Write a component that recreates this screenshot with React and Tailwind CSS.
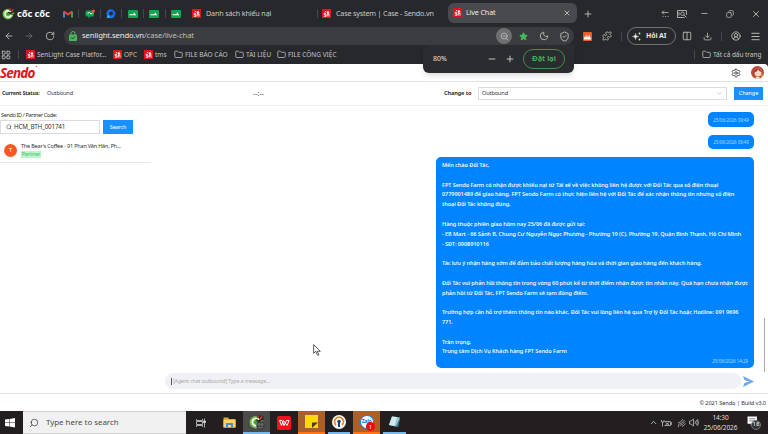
import React from 'react';
import {
  ArrowLeft, ArrowRight, RotateCw, X, Plus, Minus, Copy, Folder, LayoutGrid, Search, ZoomOut, Star, Moon,
  ShieldCheck, Puzzle, Columns2, Download, CircleUserRound, Menu, ChevronDown, ChevronUp, Settings,
} from 'lucide-react';

const message = [
  'Mến chào Đối Tác,',
  '',
  'FPT Sendo Farm có nhận được khiếu nại từ Tài xế về việc không liên hệ được với Đối Tác qua số điện thoại',
  '0779901489 để giao hàng. FPT Sendo Farm có thực hiện liên hệ với Đối Tác để xác nhận thông tin nhưng số điện',
  'thoại Đối Tác không đúng.',
  '',
  'Hàng thuộc phiên giao hôm nay 25/06 đã được gửi tại:',
  '- EB Mart - 66 Sảnh B, Chung Cư Nguyễn Ngọc Phương - Phường 19 (C), Phường 19, Quận Bình Thạnh, Hồ Chí Minh',
  '- SĐT: 0908910116',
  '',
  'Tác lưu ý nhận hàng sớm để đảm bảo chất lượng hàng hóa và thời gian giao hàng đến khách hàng.',
  '',
  'Đối Tác vui phản hồi thông tin trong vòng 60 phút kể từ thời điểm nhận được tin nhắn này. Quá hạn chưa nhận được',
  'phản hồi từ Đối Tác, FPT Sendo Farm sẽ tạm đóng điểm.',
  '',
  'Trường hợp cần hỗ trợ thêm thông tin nào khác, Đối Tác vui lòng liên hệ qua Trợ lý Đối Tác hoặc Hotline: 091 9696',
  '771.',
  '',
  'Trân trọng,',
  'Trung tâm Dịch Vụ Khách hàng FPT Sendo Farm',
];

const SendoIcon = () => (
  <svg viewBox="0 0 18 18" className="h-[9px] w-[9px] shrink-0">
    <rect width="18" height="18" fill="#e5101d" />
    <path d="M8 8.500H4.500v3H8v3H3.500M10.500 15v-4.500H14V15" fill="none" stroke="#fff" strokeWidth="1.800" />
    <path d="M9 7.500 10 4l2 1.500L13.500 3v4L16 8l-5 2z" fill="#fff" />
    <circle cx="7" cy="5" r="1.200" fill="#fff" />
  </svg>
);

const CocCocIcon = ({ className }) => (
  <svg viewBox="0 0 24 24" className={className}>
    <circle cx="11" cy="13" r="10" fill="#72bf44" />
    <path d="M11 13 13 1l10 2v11z" fill="#27282b" />
    <path d="M16 9a6 6 0 1 0 1 6" fill="none" stroke="#fff" strokeWidth="2.6" />
    <circle cx="11" cy="13" r="2.6" fill="#3a9b35" />
    <path d="m14 7 1-5M17 9l4-5" stroke="#e8452c" strokeWidth="2" />
    <path d="m18 12 5-1" stroke="#72bf44" strokeWidth="2" />
  </svg>
);

const GreenArrow = () => (
  <svg viewBox="0 0 20 16" className="h-[8px] w-[10px]">
    <rect width="20" height="16" rx="2" fill="#0ca750" />
    <path d="M3 9.500h13M12.500 5.500v4" stroke="#fff" strokeWidth="2.400" />
  </svg>
);

const Gmail = () => (
  <svg viewBox="0 0 20 16" className="h-[8px] w-[10px]">
    <path d="M2 15V3" stroke="#4285f4" strokeWidth="4" />
    <path d="M18 15V3" stroke="#34a853" strokeWidth="4" />
    <path d="m2 3 8 6 8-6" fill="none" stroke="#ea4335" strokeWidth="4" />
  </svg>
);

const ChatLogo = () => (
  <svg viewBox="0 0 20 20" className="h-[10px] w-[10px]">
    <path d="M4 3h11q3 0 3 3v6q0 3-3 3h-4l-4 4v-4H4q-3 0-3-3V6q0-3 3-3z" fill="#0ca750" />
    <path d="m5 9 4-2 3 3 3-2" fill="none" stroke="#fff" strokeWidth="2" />
    <circle cx="17" cy="4" r="3" fill="#f0562f" />
  </svg>
);

const BlueLogo = () => (
  <svg viewBox="0 0 20 20" className="h-[10px] w-[10px]">
    <circle cx="10" cy="9.500" r="9" fill="#1672ed" />
    <path d="M10 1a9 9 0 0 1 6 15" fill="none" stroke="#0b47b5" strokeWidth="2" />
    <circle cx="10" cy="9" r="4" fill="#27282b" />
    <path d="m1 18 3-6 5 5z" fill="#35c0f2" />
  </svg>
);

const Divider = () => <div className="h-[9px] w-px shrink-0 bg-[#47484b]" />;

const Header = () => (
  <div className="flex h-[27px] items-center text-[#c8c9ca]">
    <CocCocIcon className="ml-[2px] h-[13px] w-[13px] shrink-0" />
    <div className="ml-[2px] w-[36px] shrink-0 whitespace-nowrap text-[9.400px] font-bold leading-3 tracking-[-0.1px] text-white">cốc cốc</div>
    <div className="ml-[10px] flex w-[118px] shrink-0 items-center justify-between">
      <Gmail /><Divider /><ChatLogo /><Divider /><BlueLogo /><Divider />
      <GreenArrow /><Divider /><GreenArrow /><Divider /><GreenArrow />
    </div>
    <div className="flex w-[137px] shrink-0 items-center pl-[11px]">
      <SendoIcon />
      <span className="ml-[5px] whitespace-nowrap text-[7.200px] tracking-[-0.15px]">Danh sách khiếu nại</span>
      <div className="ml-auto"><Divider /></div>
    </div>
    <div className="flex w-[130px] shrink-0 items-center pl-[4px]">
      <SendoIcon />
      <span className="ml-[5px] whitespace-nowrap text-[7.200px] tracking-[-0.18px]">Case system | Case - Sendo.vn</span>
    </div>
    <div className="-mt-[2px] flex h-[20px] w-[129px] shrink-0 items-center rounded-[6px] bg-[#494a4d] px-[5px] text-[#ececec]">
      <SendoIcon />
      <span className="ml-[4px] whitespace-nowrap text-[7.200px] tracking-[-0.15px]">Live Chat</span>
      <X className="ml-auto mr-px h-[8px] w-[8px]" />
    </div>
    <Plus className="ml-[6px] h-[10px] w-[10px] shrink-0" />
    <svg viewBox="0 0 16 14" className="ml-[68px] h-[7px] w-[8px] shrink-0" fill="none" stroke="currentColor" strokeWidth="1.500">
      <path d="M15 5H2l4-4M2 5l4 4M3 13h2m3 0h2m3 0h2" />
    </svg>
    <svg viewBox="0 0 20 16" className="ml-[8px] h-[8px] w-[10px] shrink-0" fill="none" stroke="currentColor" strokeWidth="1.600">
      <path d="M19 10V1H1v14h14" /><circle cx="11" cy="7.500" r="3.500" /><path d="m14 10 5 5M4 4v7" />
    </svg>
    <Minus className="ml-[13px] h-[9px] w-[9px] shrink-0" />
    <Copy className="ml-[17px] h-[8px] w-[8px] shrink-0 -scale-x-100" />
    <X className="ml-[17px] h-[10px] w-[10px] shrink-0" />
  </div>
);

const Toolbar = () => (
  <div className="flex h-[18px] items-center text-[#c3c4c5]">
    <ArrowLeft className="ml-[4px] h-[10px] w-[10px] shrink-0" />
    <ArrowRight className="ml-[10px] h-[10px] w-[10px] shrink-0 text-[#717275]" />
    <RotateCw className="ml-[11px] h-[10px] w-[10px] shrink-0" />
    <div className="ml-[9px] flex h-[18px] w-[510px] shrink-0 items-center rounded-full bg-[#3b3c3f] pl-[5px]">
      <svg viewBox="0 0 16 20" className="h-[10px] w-[8px]">
        <path d="M4 8V5a4 4 0 0 1 8 0v3" fill="none" stroke="#48b85c" strokeWidth="2" />
        <rect y="7" width="16" height="13" rx="2" fill="#48b85c" />
        <path d="m4 13 3 3 5-5" fill="none" stroke="#27282b" strokeWidth="1.800" />
      </svg>
      <span className="ml-[5px] whitespace-nowrap text-[7.700px] tracking-[-0.12px] text-[#e9e9e9]">senlight.sendo.vn<span className="text-[#bdbebf]">/case/live-chat</span></span>
      <div className="ml-auto flex h-[16px] w-[16px] items-center justify-center rounded-full bg-[#6e6f71]">
        <ZoomOut className="h-[9px] w-[9px]" />
      </div>
      <Star className="ml-[7px] h-[9px] w-[9px] fill-[#48b85c] text-[#48b85c]" />
      <Moon className="ml-[11px] h-[10px] w-[10px]" />
      <ShieldCheck className="ml-[10px] mr-[4px] h-[11px] w-[11px]" />
    </div>
    <svg viewBox="0 0 18 18" className="ml-[9px] h-[9px] w-[9px] shrink-0">
      <rect width="18" height="18" rx="2" fill="#f15a24" />
      <path d="M2 15v-4l2-2v3l2-6v5l2-7 1 7 2-4v3l3-5v7l2-2v5z" fill="#fff" />
    </svg>
    <Puzzle className="ml-[10px] h-[10px] w-[10px]" />
    <div className="ml-[9px]"><Divider /></div>
    <div className="ml-[5px] flex h-[18px] w-[49px] shrink-0 items-center rounded-full border border-[#707173] pl-[4px] text-[#e4eadf]">
      <svg viewBox="0 0 18 18" className="h-[9px] w-[9px]" fill="currentColor">
        <path d="M7 3q0 6 6 6-6 0-6 6 0-6-6-6 6 0 6-6z" stroke="currentColor" /><circle cx="15" cy="3" r="1.800" /><circle cx="15" cy="15" r="1.800" />
      </svg>
      <span className="ml-[5px] whitespace-nowrap text-[6.900px] font-bold tracking-[-0.1px]">Hỏi AI</span>
    </div>
    <Columns2 className="ml-[6px] h-[10px] w-[10px]" />
    <Download className="ml-[11px] h-[9px] w-[9px]" />
    <div className="ml-[9px]"><Divider /></div>
    <CircleUserRound className="ml-[9px] h-[10px] w-[10px]" />
    <Menu className="ml-[9px] h-[11px] w-[11px]" />
  </div>
);

const Bookmark = ({ folder, className, children }) => (
  <div className={`flex shrink-0 items-center whitespace-nowrap text-[6.500px] ${className}`}>
    {folder ? <Folder className="mr-[2px] h-[9px] w-[9px]" /> : <span className="mr-[2px]"><SendoIcon /></span>}
    {children}
  </div>
);

const Bookmarks = () => (
  <div className="flex h-[19px] items-center text-[#c3c4c5]">
    <LayoutGrid className="ml-[1px] h-[10px] w-[10px]" />
    <div className="ml-[7px]"><Divider /></div>
    <Bookmark className="ml-[7px] w-[87px]">SenLight Case Platfor...</Bookmark>
    <Bookmark className="w-[31px]">OPC</Bookmark>
    <Bookmark className="w-[30px]">tms</Bookmark>
    <Bookmark folder className="w-[61px]">FILE BÁO CÁO</Bookmark>
    <Bookmark folder className="w-[42px]">TÀI LIỆU</Bookmark>
    <Bookmark folder className="w-[64px]">FILE CÔNG VIỆC</Bookmark>
    <div className="ml-auto"><Divider /></div>
    <Bookmark folder className="ml-[7px] w-[66px] tracking-[-0.05px]">Tất cả dấu trang</Bookmark>
  </div>
);

const ZoomPopup = () => (
  <div className="absolute left-[423px] top-[45px] flex h-[28px] w-[151px] items-center rounded-b-[6px] rounded-tl-[6px] bg-[#2b2c2f] text-[#e0e0e0] shadow-md">
    <span className="ml-[10px] w-[54px] text-[7px]">80%</span>
    <Minus className="h-[10px] w-[10px]" />
    <Plus className="ml-[8px] h-[10px] w-[10px]" />
    <div className="ml-[8px] flex h-[20px] w-[42px] items-center justify-center whitespace-nowrap rounded-full border border-[#3d9250] text-[7.600px] font-semibold text-[#45b95c]">Đặt lại</div>
  </div>
);

const Avatar = () => (
  <svg viewBox="0 0 26 26" className="h-[13px] w-[13px] overflow-hidden rounded-full">
    <rect width="26" height="26" fill="#b84b38" />
    <ellipse cx="14" cy="13" rx="7" ry="8" fill="#fbd5bd" />
    <path d="M5 14C6 3 19 1 22 13l-5-3-3-3-3 4z" fill="#a13a2f" />
    <path d="M7 26q6-9 13 0z" fill="#f7e9df" />
    <path d="M20 17h6v9h-6z" fill="#e98c4b" />
  </svg>
);

const SidePanel = () => (
  <div className="w-[165px] shrink-0 text-[5.500px] tracking-[-0.19px] text-[#333]">
    <div className="mt-[5px] whitespace-nowrap pl-px leading-[9px] tracking-[-0.35px]">Sendo ID / Partner Code:</div>
    <div className="flex h-[14px]">
      <div className="flex w-[100px] items-center border border-[#dcdcdc] pl-[5px]">
        <Search className="h-[6px] w-[6px]" />
        <span className="ml-[2px] text-[6.300px]">HCM_BTH_001741</span>
      </div>
      <button className="ml-[3px] w-[30px] bg-[#1890ff] text-[5.500px] text-white">Search</button>
    </div>
    <div className="mt-[7px] flex h-[22px] w-[151px] border-b border-[#e8e8e8] pl-[4px]">
      <div className="mt-[3px] flex h-[13px] w-[13px] items-center justify-center rounded-full bg-[#ff5722] text-[5.500px] text-white">T</div>
      <div className="ml-[4px]">
        <div className="whitespace-nowrap leading-[10px]">The Bear's Coffee - 91 Phan Văn Hân, Ph...</div>
        <div className="h-[7px] w-[20px] bg-[#b7f7c8] text-center text-[5.500px] leading-[7px] tracking-[-0.1px] text-[#5cb377]">Partner</div>
      </div>
    </div>
  </div>
);

const TimeBubble = ({ className }) => (
  <div className={`flex w-[46px] items-center justify-center self-end rounded-[5px] bg-[#0084ff] pt-px text-[4.400px] text-[#b5daff] ${className}`}>25/06/2026 09:49</div>
);

const Chat = () => (
  <div className="relative flex w-[589px] flex-col">
    <TimeBubble className="mt-[6px] h-[15px]" />
    <TimeBubble className="mt-[8px] h-[14px]" />
    <div className="mt-[8px] h-[211px] w-[318px] self-end rounded-[5px] bg-[#0084ff] px-[6px] pt-[4px] text-[5.600px] font-semibold leading-[9.820px] tracking-[-0.1px] text-[#eef7ff]">
      {message.map((line, i) => (
        <div key={i} className="h-[9.820px] whitespace-nowrap">{line}</div>
      ))}
      <div className="text-right text-[4.400px] font-normal leading-[9px] tracking-normal text-[#b5daff]">25/06/2026 14:29</div>
    </div>
    <div className="mt-[5px] flex h-[16px] items-center">
      <div className="flex h-[16px] w-[576px] shrink-0 items-center rounded-full bg-[#f0f1f5] pl-[6px] text-[5.400px] tracking-[-0.17px] text-[#aaa]">
        <span className="h-[7px] w-px bg-[#555]" /><span className="ml-px">[Agent chat outbound] Type a message...</span>
      </div>
      <svg viewBox="0 0 22 22" className="ml-[2px] h-[11px] w-[11px]"><path d="M0 0 22 11 0 22l3-8 10-3L3 8z" fill="#69a5ee" /></svg>
    </div>
    <svg viewBox="0 0 12 18" className="absolute left-[148px] top-[238px] h-[12px] w-[8px]">
      <path d="M1 1v13l3-3 3 6 2-1-3-5h5z" fill="#fff" stroke="#333" strokeWidth="1.200" />
    </svg>
  </div>
);

const Page = () => (
  <div className="flex h-[347px] flex-col rounded-tr-[4px] bg-white text-[#333]">
    <div className="flex h-[18px] shrink-0 items-center border-b border-[#e3e3e3]">
      <div className="flex text-[13.500px] font-bold italic leading-[18px] tracking-[-0.850px] text-[#e5101d]">Sendo<span className="-mt-[3px] ml-px text-[4px] leading-[12px]">•</span></div>
      <Settings className="ml-auto h-[10px] w-[10px]" />
      <div className="ml-[10px] mr-[4px]"><Avatar /></div>
    </div>
    <div className="flex h-[24px] shrink-0 items-center whitespace-nowrap border-b border-[#f3f3f3] text-[5.600px] tracking-[-0.13px]">
      <b className="ml-[2px] w-[45px] text-[5.400px] tracking-[-0.22px]">Current Status:</b>
      <span className="w-[206px]">Outbound</span>
      <span className="w-[191px] text-[6.500px] tracking-[0.2px]">--:--</span>
      <b className="w-[33px]">Change to</b>
      <div className="ml-[1px] flex h-[13px] w-[249px] items-center justify-between border border-[#dcdcdc] px-[3px]">
        Outbound <ChevronDown className="h-[7px] w-[7px] text-[#aaa]" />
      </div>
      <button className="ml-[7px] h-[13px] w-[29px] bg-[#1890ff] text-[5.600px] text-white">Change</button>
    </div>
    <div className="flex h-[287px] shrink-0">
      <SidePanel />
      <Chat />
      <div className="ml-auto mr-[3px] mt-[212px] h-[54px] w-px bg-[#a5a9ad]" />
    </div>
    <div className="flex h-[18px] items-center justify-end border-t border-[#e3e3e3] pr-[2px] pt-[2px] text-[5.700px] tracking-[-0.12px]">© 2021 Sendo | Build v3.0</div>
  </div>
);

const Taskbar = () => (
  <div className="flex h-[23px] items-center bg-[#231f20] text-[#dedede]">
    <svg viewBox="0 0 20 20" className="ml-[5px] mr-[7px] h-[10px] w-[10px] shrink-0" fill="#fff">
      <path d="m0 3 8-1v7H0zM9 2l11-2v9H9zM0 10h8v7l-8-1zM9 10h11v9L9 17z" />
    </svg>
    <div className="ml-[1px] flex h-[23px] w-[163px] shrink-0 items-center border-y border-[#cfcfcf] bg-[#f1f1f1] text-[#4c4c4c]">
      <Search className="ml-[6px] h-[10px] w-[10px] -scale-x-100" />
      <span className="ml-[7px] whitespace-nowrap text-[7.900px]">Type here to search</span>
    </div>
    <div className="flex w-[29px] justify-center">
      <svg viewBox="0 0 20 20" className="h-[10px] w-[10px]" fill="none" stroke="currentColor" strokeWidth="1.500">
        <path d="M1 2v3h12V2M1 18v-3h12v3M1 7h12v6H1zM17 1v18" /><path d="M15 6h4v3h-4z" fill="currentColor" />
      </svg>
    </div>
    <div className="flex w-[28px] justify-center">
      <svg viewBox="0 0 26 22" className="h-[11px] w-[13px]">
        <path d="M1 1h9l2 3h13v17H1z" fill="#e8a92c" /><path d="M1 6h24v15H1z" fill="#ffd566" />
        <path d="M6 21v-9h14v9h-4v-5h-6v5z" fill="#3793df" />
      </svg>
    </div>
    <div className="relative flex h-[23px] w-[27px] items-center justify-center border-b-2 border-[#76b9ed] bg-[#4c4b4c]">
      <CocCocIcon className="h-[15px] w-[15px]" />
      <svg viewBox="0 0 18 18" className="absolute left-[13px] top-[10px] h-[9px] w-[9px]">
        <circle cx="9" cy="9" r="8.500" fill="#3c3e3e" /><circle cx="6" cy="7" r="2" fill="none" stroke="#aaa" /><circle cx="12" cy="7" r="2" fill="none" stroke="#aaa" />
        <path d="M4 12q5 4 10 0" fill="none" stroke="#aaa" />
      </svg>
    </div>
    <div className="flex w-[28px] justify-center">
      <svg viewBox="0 0 28 28" className="h-[14px] w-[14px]">
        <rect width="28" height="28" rx="4" fill="#f5101f" /><path d="M5 9h5l4 10 5-10h5l-4 10-7-10-4 10z" fill="none" stroke="#fff" strokeWidth="2" />
      </svg>
    </div>
    <div className="flex h-[23px] w-[27px] items-center justify-center border-b-2 border-[#ff7415] bg-[#aa6027]">
      <svg viewBox="0 0 26 26" className="h-[13px] w-[13px]"><path d="M0 0h26v26H0z" fill="#ffd70a" /><path d="M14 26V15h12z" fill="#4a4023" /></svg>
    </div>
    <div className="ml-[3px] flex h-[23px] w-[22px] items-center justify-center border-b-2 border-[#76b9ed]">
      <svg viewBox="0 0 28 28" className="h-[14px] w-[14px]">
        <circle cx="14" cy="14" r="14" fill="#fff" />
        <path d="M8 20a9 9 0 1 1 12 0" fill="none" stroke="#ef8325" strokeWidth="3.500" />
        <circle cx="14" cy="13" r="3.500" fill="#233c66" /><path d="M12 14h4v10h-4z" fill="#233c66" />
      </svg>
    </div>
    <div className="relative ml-[3px] flex h-[23px] w-[27px] items-center justify-center border-b-2 border-[#ff7415] bg-[#aa6027]">
      <div className="flex h-[14px] w-[14px] justify-center rounded-full border border-[#2479e8] bg-white pt-[2px] text-[5px] font-bold leading-[6px] tracking-[-0.2px] text-[#1769e0]">Zalo</div>
      <div className="absolute left-[13px] top-[11px] flex h-[9px] w-[9px] items-center justify-center rounded-full bg-[#f10909] text-[6px] leading-[6px] text-white">1</div>
    </div>
    <div className="ml-[3px] flex h-[23px] w-[23px] items-center justify-center border-b-2 border-[#76b9ed]">
      <svg viewBox="0 0 26 24" className="h-[12px] w-[13px]"><path d="M8 1 24 3l-4 19L2 18z" fill="#8fc9d4" /><path d="m8 1 10 1-5 18-11-2z" fill="#d2e8e9" /><path d="m24 3-4 19-4-1z" fill="#346b7d" /></svg>
    </div>
    <ChevronUp className="ml-auto h-[9px] w-[9px]" />
    <svg viewBox="0 0 22 16" className="ml-[3px] h-[8px] w-[11px]" fill="none" stroke="currentColor" strokeWidth="1.300">
      <path d="M7 5h12v8H7M20 7h1v4h-1M1 2v4h5V2M3 6v9m6-8 7 5m0-5-7 5" />
    </svg>
    <svg viewBox="0 0 18 18" className="ml-[5px] h-[9px] w-[9px]" fill="none" stroke="currentColor" strokeWidth="1.200">
      <path d="M2 10q6-1 10-8M3 13q7-1 12-9M6 15q6-1 10-8M10 17q4-1 7-6" /><circle cx="3" cy="16" r="1" />
    </svg>
    <svg viewBox="0 0 20 18" className="ml-[3px] h-[9px] w-[10px]" fill="none" stroke="currentColor" strokeWidth="1.300">
      <path d="M1 6h3l5-4v14l-5-4H1zM12 6q2 3 0 6M15 4q3 5 0 10M17 2q4 7 0 14" />
    </svg>
    <div className="ml-[4px] w-[35px] whitespace-nowrap text-center text-[6.500px] leading-[10px] tracking-[-0.1px]"><div>14:30</div><div>25/06/2026</div></div>
    <div className="relative ml-[9px] mr-[6px] h-[14px] w-[15px]">
      <svg viewBox="0 0 20 20" className="h-[11px] w-[11px]"><path d="M1 1h17v13h-7l-4 4v-4H1z" fill="#fff" /><path d="M4 5h11M4 9h11" stroke="#231f20" /></svg>
      <span className="absolute left-[4px] top-[4px] flex h-[10px] w-[10px] items-center justify-center rounded-full border border-[#777] bg-[#333] text-[6px] text-white">18</span>
    </div>
  </div>
);

const App = () => (
  <div className="relative h-[434px] w-[768px] overflow-hidden bg-[#27282b] font-['Noto_Sans','Open_Sans',sans-serif]">
    <Header />
    <Toolbar />
    <Bookmarks />
    <Page />
    <Taskbar />
    <ZoomPopup />
  </div>
);

export default App;
